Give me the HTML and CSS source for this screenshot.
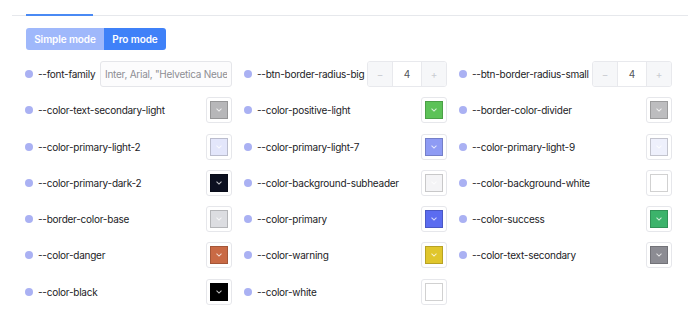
FILE: index.html
```html
<!DOCTYPE html>
<html lang="en">
<head>
    <meta charset="UTF-8">
    <meta name="viewport" content="width=device-width, initial-scale=1.0">
    <title>Theme variables</title>
    <link rel="stylesheet" href="styles.css">
</head>
<body>
    <div class="tabs">
        <div class="tab active"></div>
    </div>

    <div class="mode-switch">
        <button class="mode">Simple mode</button>
        <button class="mode current">Pro mode</button>
    </div>

    <div class="vars">
        <div class="var">
            <span class="label"><i class="dot"></i>--font-family</span>
            <input class="text-input" placeholder='Inter, Arial, "Helvetica Neue", Helvetica, sans-serif'>
        </div>
        <div class="var">
            <span class="label"><i class="dot"></i>--btn-border-radius-big</span>
            <div class="stepper"><span class="step">&minus;</span><span class="value">4</span><span class="step">+</span></div>
        </div>
        <div class="var">
            <span class="label"><i class="dot"></i>--btn-border-radius-small</span>
            <div class="stepper"><span class="step">&minus;</span><span class="value">4</span><span class="step">+</span></div>
        </div>

        <div class="var">
            <span class="label"><i class="dot"></i>--color-text-secondary-light</span>
            <span class="swatch"><span class="chip" style="background:#b7b7b9"></span></span>
        </div>
        <div class="var">
            <span class="label"><i class="dot"></i>--color-positive-light</span>
            <span class="swatch"><span class="chip" style="background:#5cc257"></span></span>
        </div>
        <div class="var">
            <span class="label"><i class="dot"></i>--border-color-divider</span>
            <span class="swatch"><span class="chip" style="background:#bdbdbf"></span></span>
        </div>

        <div class="var">
            <span class="label"><i class="dot"></i>--color-primary-light-2</span>
            <span class="swatch"><span class="chip" style="background:#e3e6fb"></span></span>
        </div>
        <div class="var">
            <span class="label"><i class="dot"></i>--color-primary-light-7</span>
            <span class="swatch"><span class="chip" style="background:#8e9bf4"></span></span>
        </div>
        <div class="var">
            <span class="label"><i class="dot"></i>--color-primary-light-9</span>
            <span class="swatch"><span class="chip" style="background:#eef0fc"></span></span>
        </div>

        <div class="var">
            <span class="label"><i class="dot"></i>--color-primary-dark-2</span>
            <span class="swatch"><span class="chip" style="background:#0c1020"></span></span>
        </div>
        <div class="var">
            <span class="label"><i class="dot"></i>--color-background-subheader</span>
            <span class="swatch"><span class="chip" style="background:#f4f4f6"></span></span>
        </div>
        <div class="var">
            <span class="label"><i class="dot"></i>--color-background-white</span>
            <span class="swatch"><span class="chip" style="background:#ffffff"></span></span>
        </div>

        <div class="var">
            <span class="label"><i class="dot"></i>--border-color-base</span>
            <span class="swatch"><span class="chip" style="background:#dcdde1"></span></span>
        </div>
        <div class="var">
            <span class="label"><i class="dot"></i>--color-primary</span>
            <span class="swatch"><span class="chip" style="background:#5b6cf0"></span></span>
        </div>
        <div class="var">
            <span class="label"><i class="dot"></i>--color-success</span>
            <span class="swatch"><span class="chip" style="background:#3cb36b"></span></span>
        </div>

        <div class="var">
            <span class="label"><i class="dot"></i>--color-danger</span>
            <span class="swatch"><span class="chip" style="background:#c96a45"></span></span>
        </div>
        <div class="var">
            <span class="label"><i class="dot"></i>--color-warning</span>
            <span class="swatch"><span class="chip" style="background:#e0c62c"></span></span>
        </div>
        <div class="var">
            <span class="label"><i class="dot"></i>--color-text-secondary</span>
            <span class="swatch"><span class="chip" style="background:#8c8c93"></span></span>
        </div>

        <div class="var">
            <span class="label"><i class="dot"></i>--color-black</span>
            <span class="swatch"><span class="chip" style="background:#000000"></span></span>
        </div>
        <div class="var">
            <span class="label"><i class="dot"></i>--color-white</span>
            <span class="swatch"><span class="chip" style="background:#ffffff"></span></span>
        </div>
    </div>
</body>
</html>
```

FILE: styles.css
```css
body {
    font-family: Inter, 'Noto Sans', sans-serif;
    background-color: #ffffff;
    color: #222226;
    margin: 0;
}

.tabs {
    display: flex;
    height: 15px;
    margin-left: 12px;
    border-bottom: 1px solid #e6e8ec;
}

.tab {
    width: 67px;
    margin-left: 14px;
}

.tab.active {
    border-bottom: 2px solid #4a8af4;
    margin-bottom: -1px;
    height: 14px;
}

.mode-switch {
    display: flex;
    margin: 12px 0 0 26px;
}

.mode {
    font-family: inherit;
    font-size: 10px;
    font-weight: 600;
    letter-spacing: -0.1px;
    color: #ffffff;
    border: none;
    height: 22px;
    padding: 0;
    white-space: nowrap;
    background: #9fb8fb;
    cursor: pointer;
}

.mode:first-child {
    width: 78px;
    border-radius: 3px 0 0 3px;
}

.mode.current {
    width: 62px;
    background: #3f81f8;
    border-radius: 0 3px 3px 0;
}

.vars {
    display: grid;
    grid-template-columns: 207px 203px 213px;
    column-gap: 12px;
    row-gap: 10.3px;
    margin: 11px 0 0 25px;
}

.var {
    display: flex;
    align-items: center;
    justify-content: space-between;
    height: 26px;
}

.label {
    display: flex;
    align-items: center;
    font-size: 10px;
    letter-spacing: -0.25px;
    white-space: nowrap;
}

.dot {
    width: 8px;
    height: 8px;
    border-radius: 50%;
    background: #aab1f3;
    margin-right: 5px;
    flex-shrink: 0;
}

.text-input {
    width: 132px;
    height: 26px;
    box-sizing: border-box;
    border: 1px solid #e5e6ea;
    border-radius: 3px;
    padding: 0 4px;
    font-family: inherit;
    font-size: 10px;
    letter-spacing: -0.25px;
    background: #fcfcfd;
}

.text-input::placeholder {
    color: #8d8e94;
}

.stepper {
    display: flex;
    width: 80px;
    height: 26px;
    box-sizing: border-box;
    border: 1px solid #e8e9ed;
    border-radius: 3px;
    overflow: hidden;
    font-size: 10px;
}

.step {
    width: 24px;
    display: flex;
    align-items: center;
    justify-content: center;
    background: #f6f7f9;
    color: #c9cbd1;
}

.value {
    flex: 1;
    display: flex;
    align-items: center;
    justify-content: center;
    border-left: 1px solid #e8e9ed;
    border-right: 1px solid #e8e9ed;
    color: #55565c;
}

.swatch {
    width: 26px;
    height: 26px;
    box-sizing: border-box;
    border: 1px solid #e6e7eb;
    border-radius: 3px;
    background: #ffffff;
    display: flex;
    align-items: center;
    justify-content: center;
}

.chip {
    width: 18px;
    height: 18px;
    box-sizing: border-box;
    border: 1px solid rgba(0, 0, 0, 0.18);
    position: relative;
}

.chip::after {
    content: "";
    position: absolute;
    left: 6px;
    top: 5px;
    width: 3px;
    height: 3px;
    border-right: 1px solid rgba(255, 255, 255, 0.75);
    border-bottom: 1px solid rgba(255, 255, 255, 0.75);
    transform: rotate(45deg);
}
```
